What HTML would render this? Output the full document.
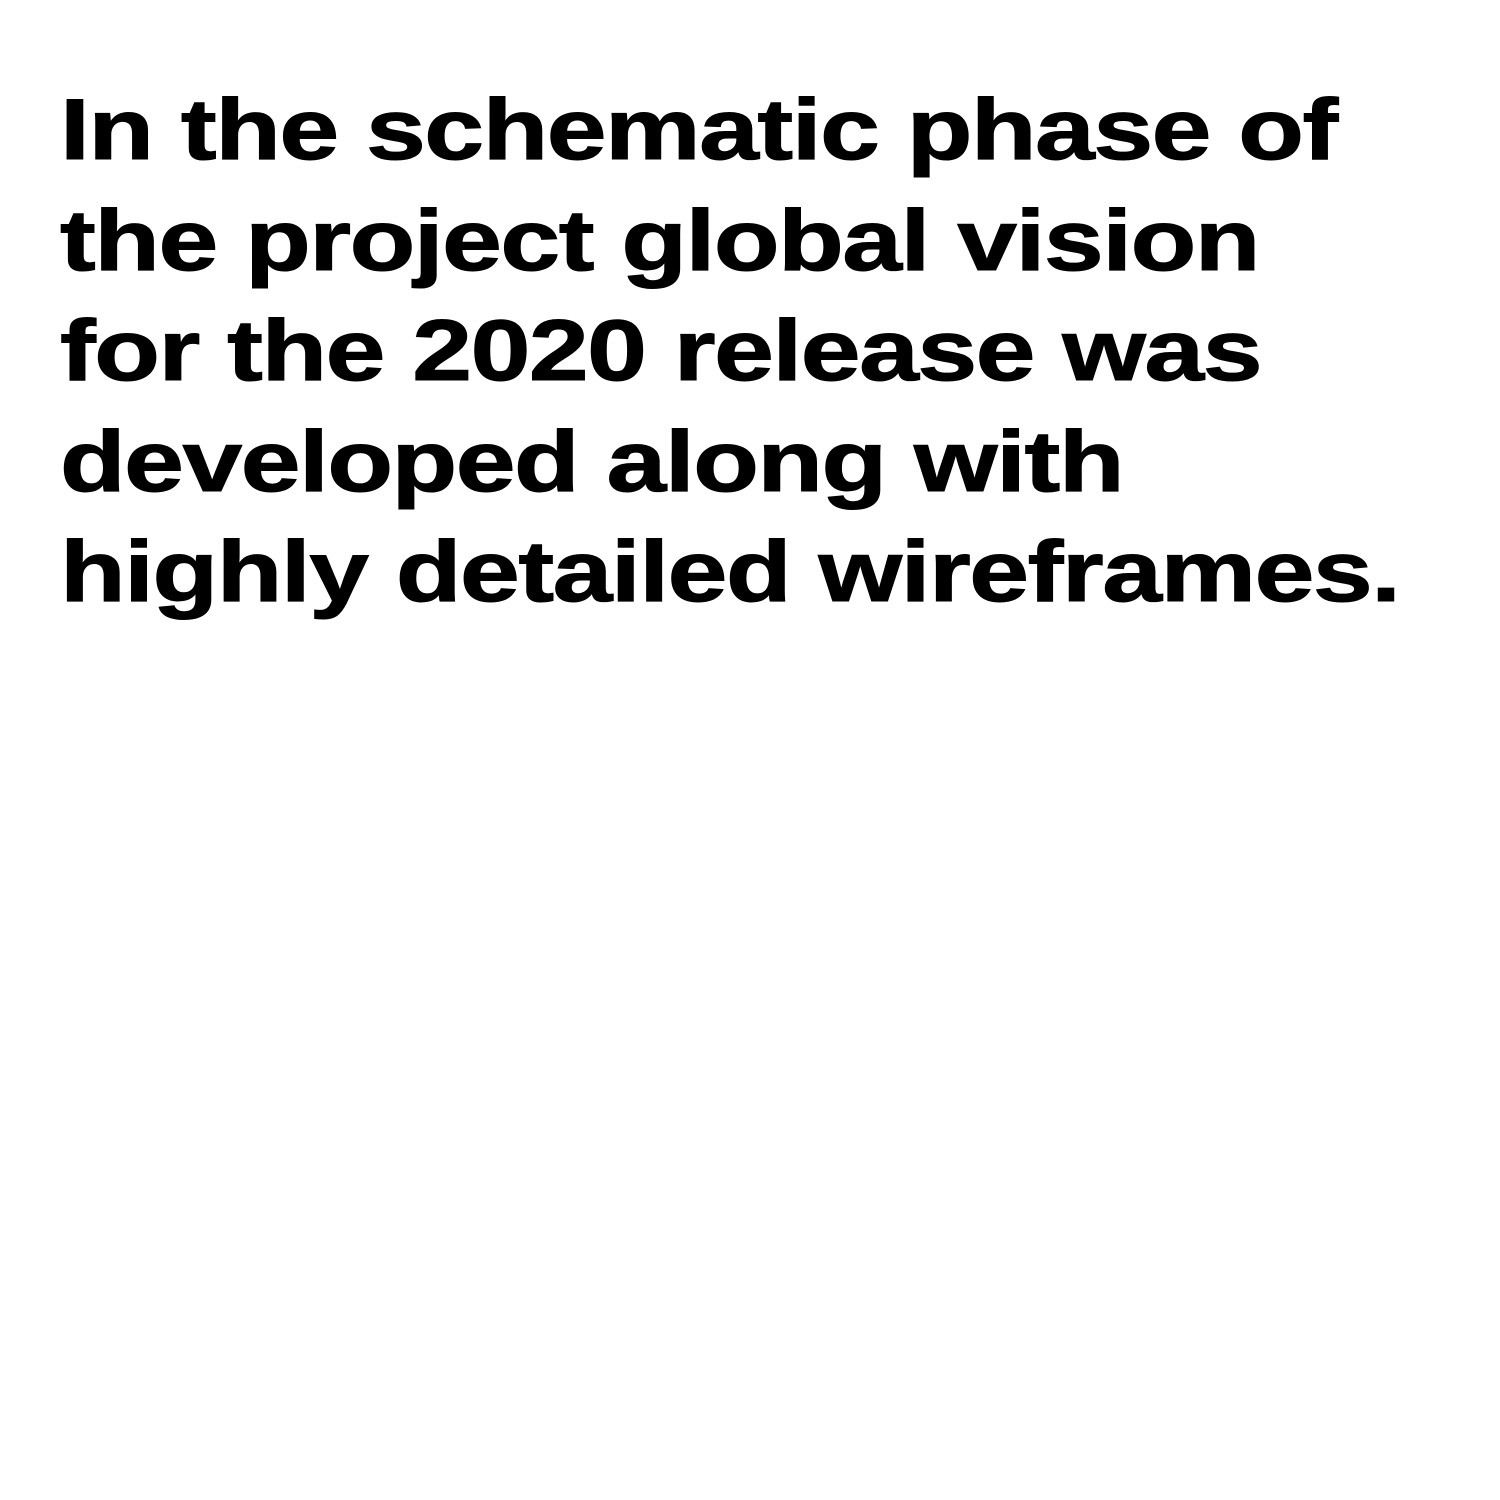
<!DOCTYPE html>
<html><head><meta charset="utf-8"><style>
html,body{margin:0;padding:0;background:#fff;width:1500px;height:1500px;overflow:hidden}
.t{position:absolute;left:60px;top:75px;font-family:"Liberation Sans",Arial,sans-serif;font-weight:bold;font-size:86px;line-height:110.5px;color:#000;letter-spacing:-1.2px;white-space:nowrap;transform:scaleX(1.25);transform-origin:0 0;-webkit-text-stroke:1px #000}
</style></head><body>
<div class="t">In the schematic phase of<br>the project global vision<br>for the 2020 release was<br>developed along with<br>highly detailed wireframes.</div>
</body></html>
